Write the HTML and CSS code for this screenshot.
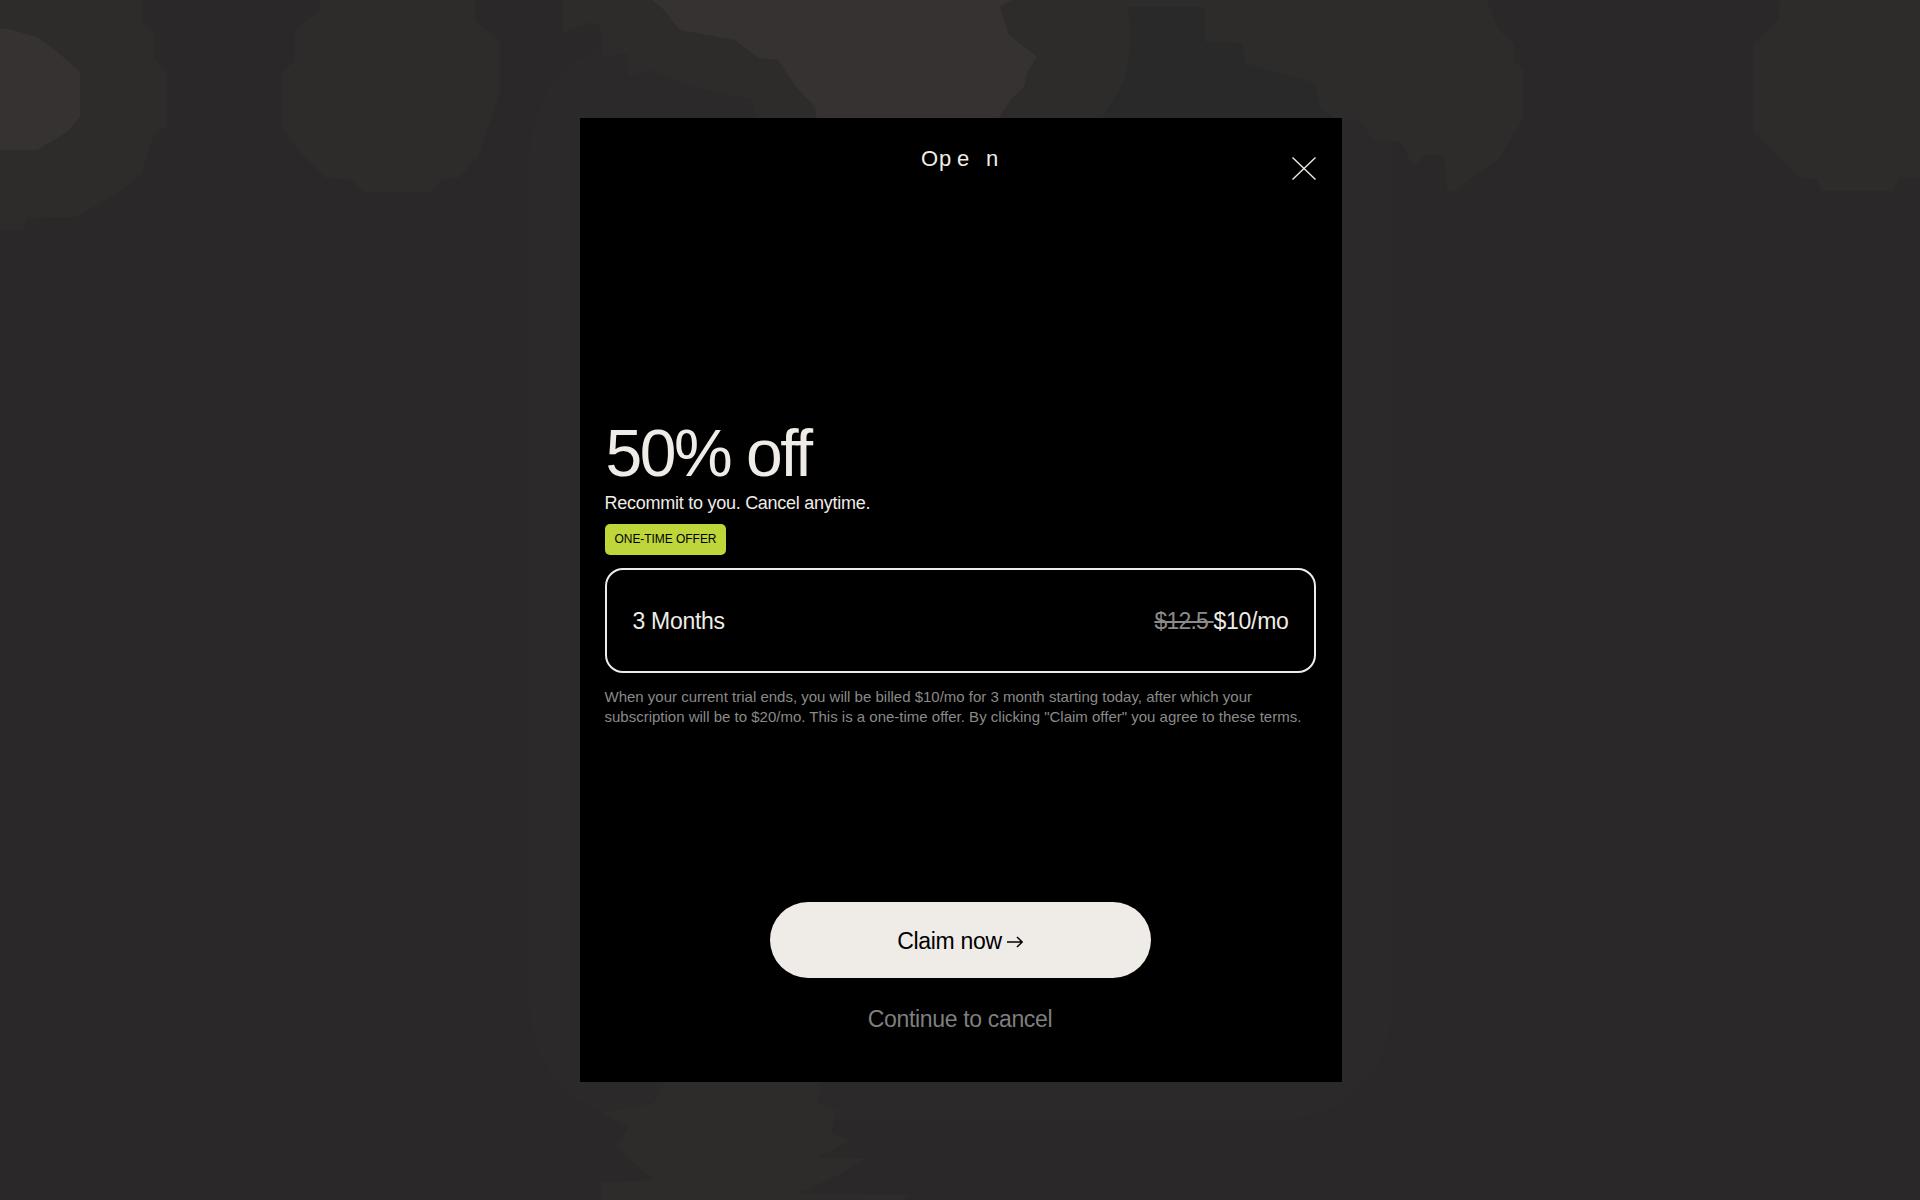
FILE: index.html
```html
<!DOCTYPE html>
<html lang="en">
<head>
    <meta charset="UTF-8">
    <meta name="viewport" content="width=device-width, initial-scale=1.0">
    <title>Open - Special offer</title>
    <link rel="stylesheet" href="styles.css">
</head>
<body>
    <!-- blurred photo behind the overlay -->
    <svg class="backdrop" viewBox="0 0 1920 1200" aria-hidden="true">
        <rect class="shade-faint" x="530" y="40" width="862" height="1080" rx="110"/>
        <polygon class="shade-mid" points="0,0 142,0 142,20 154,33 154,60 167,70 167,127 154,133 142,173 122,190 77,217 28,218 24,230 0,230"/>
        <polygon class="shade-light" points="0,28 12,30 37,37 55,50 80,72 80,117 67,132 37,150 0,150"/>
        <polygon class="shade-mid" points="320,0 320,10 295,30 295,60 282,73 282,127 295,147 325,178 352,180 364,192 432,192 441,180 459,178 478,157 500,93 500,42 475,20 475,0"/>
        <polygon class="shade-mid" points="563,0 563,33 588,23 600,25 603,58 628,53 628,77 649,70 692,87 753,100 756,120 1358,120 1373,140 1401,142 1413,167 1425,155 1444,155 1447,190 1456,192 1468,180 1499,160 1514,133 1523,120 1523,70 1514,60 1514,43 1499,30 1487,0"/>
        <polygon class="shade-light" points="652,0 664,10 680,30 735,40 759,58 778,60 796,87 815,107 817,120 997,120 1012,98 1024,87 1027,73 1037,57 1009,35 1000,7 1012,0"/>
        <polygon class="shade-base" points="1128,7 1205,7 1205,42 1242,43 1245,63 1315,83 1321,110 1340,120 1101,120 1125,80 1131,43"/>
        <polygon class="shade-mid" points="1780,0 1778,20 1753,43 1753,133 1799,177 1817,180 1820,191 1894,191 1900,178 1920,178 1920,0"/>
        <polygon class="shade-mid" points="665,1080 822,1080 818,1103 837,1110 831,1133 852,1140 818,1157 867,1158 843,1173 812,1187 797,1193 910,1195 904,1200 601,1200 601,1182 653,1180 616,1147 629,1127 601,1113 653,1103"/>
    </svg>

    <div class="modal">
        <header class="modal-header">
            <div class="logo"><span>Op</span><span class="logo-e">e</span><span class="logo-n">n</span></div>
            <button class="close-button" aria-label="Close">
                <svg viewBox="0 0 24 23" width="24" height="23">
                    <path d="M0.5 0.5 L23.5 22.5 M23.5 0.5 L0.5 22.5" fill="none" stroke="#efece7" stroke-width="1.4"/>
                </svg>
            </button>
        </header>

        <section class="offer">
            <h1 class="offer-title">50% off</h1>
            <p class="offer-subtitle">Recommit to you. Cancel anytime.</p>
            <span class="offer-badge">ONE-TIME OFFER</span>

            <div class="plan-card">
                <span class="plan-name">3 Months</span>
                <span class="plan-price"><s>$12.5 </s>$10/mo</span>
            </div>

            <p class="terms">When your current trial ends, you will be billed $10/mo for 3 month starting today, after which your<br>subscription will be to $20/mo. This is a one-time offer. By clicking "Claim offer" you agree to these terms.</p>
        </section>

        <footer class="actions">
            <button class="claim-button">
                <span class="claim-label">Claim now</span>
                <svg class="claim-arrow" viewBox="0 0 16 12" width="16" height="12">
                    <path d="M0 6 H15 M10 1 L15.2 6 L10 11" fill="none" stroke="#000" stroke-width="1.5"/>
                </svg>
            </button>
            <a class="cancel-link" href="#">Continue to cancel</a>
        </footer>
    </div>
</body>
</html>
```

FILE: styles.css
```css
* {
    margin: 0;
    padding: 0;
    box-sizing: border-box;
    font-family: "Liberation Sans", Arial, sans-serif;
}

body {
    background: #2a2828;
    height: 100vh;
    padding-left: 1px;
    display: flex;
    justify-content: center;
    align-items: center;
    overflow: hidden;
}

.backdrop {
    position: absolute;
    top: 0;
    left: 0;
    width: 100%;
    height: 100%;
}

.shade-faint {
    fill: #2b2929;
}

.shade-mid {
    fill: #2d2c2a;
}

.shade-light {
    fill: #363231;
}

.shade-base {
    fill: #2a2929;
}

.modal {
    position: relative;
    width: 762px;
    height: 964px;
    background: #000;
    padding: 26px 26px 48px 25px;
    display: flex;
    flex-direction: column;
}

.modal-header {
    display: flex;
    justify-content: center;
}

.logo {
    display: flex;
    color: #efece7;
    font-size: 22px;
    line-height: 30px;
    letter-spacing: 0.8px;
}

.logo-e {
    margin-left: 5px;
}

.logo-n {
    margin-left: 16px;
}

.close-button {
    position: absolute;
    top: 39px;
    right: 26px;
    width: 24px;
    height: 23px;
    background: none;
    border: none;
    cursor: pointer;
}

.offer {
    margin-top: 246px;
    display: flex;
    flex-direction: column;
    align-items: flex-start;
}

.offer-title {
    color: #efece7;
    font-size: 66px;
    line-height: 66px;
    font-weight: 400;
    letter-spacing: -2.5px;
    margin-left: 1px;
}

.offer-subtitle {
    color: #efece7;
    font-size: 18px;
    line-height: 24px;
    letter-spacing: -0.26px;
    margin-top: 5px;
}

.offer-badge {
    background: #bed63a;
    color: #000;
    font-size: 12px;
    letter-spacing: -0.05px;
    line-height: 31px;
    height: 31px;
    padding: 0 10px;
    border-radius: 5px;
    margin-top: 9px;
}

.plan-card {
    width: 100%;
    height: 105px;
    margin-top: 13px;
    padding: 2px 25px 0 26px;
    border: 2px solid #efece7;
    border-radius: 18px;
    display: flex;
    justify-content: space-between;
    align-items: center;
    color: #efece7;
    font-size: 23px;
    letter-spacing: -0.3px;
}

.plan-price s {
    color: #8a8a88;
    letter-spacing: -0.8px;
}

.terms {
    color: #8a8a88;
    font-size: 15px;
    line-height: 20px;
    margin-top: 14px;
}

.actions {
    margin-top: auto;
    display: flex;
    flex-direction: column;
    align-items: center;
}

.claim-button {
    width: 381px;
    height: 76px;
    background: #efece7;
    border: none;
    border-radius: 38px;
    color: #000;
    font-size: 23px;
    letter-spacing: -0.3px;
    cursor: pointer;
    display: flex;
    justify-content: center;
    align-items: center;
    gap: 5px;
}

.claim-label {
    padding-top: 2px;
}

.claim-arrow {
    margin-top: 4px;
}

.cancel-link {
    margin-top: 26px;
    color: #7f7f7d;
    font-size: 23px;
    line-height: 30px;
    letter-spacing: -0.33px;
    text-decoration: none;
}
```
